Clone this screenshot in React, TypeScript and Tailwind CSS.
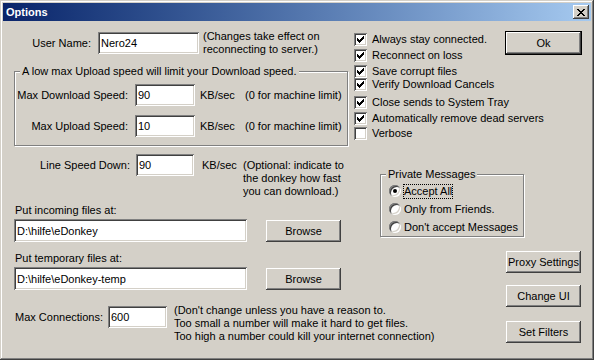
import React from "react";

const raised =
  "bg-[#d4d0c8] shadow-[inset_-1px_-1px_#404040,inset_1px_1px_#ffffff,inset_-2px_-2px_#808080,inset_2px_2px_#d4d0c8]";
const sunken =
  "bg-white shadow-[inset_1px_1px_#808080,inset_-1px_-1px_#ffffff,inset_2px_2px_#404040,inset_-2px_-2px_#d4d0c8]";
const etched = "border border-[#808080] shadow-[inset_1px_1px_#ffffff,1px_1px_#ffffff]";

function TextBox({ value, className }: { value: string; className: string }) {
  return (
    <input
      readOnly
      defaultValue={value}
      className={`${sunken} shrink-0 pl-[3px] pr-[2px] text-black outline-none ${className}`}
    />
  );
}

function Button({ label, className }: { label: string; className: string }) {
  return (
    <button className={`${raised} flex h-[22px] w-[75px] shrink-0 items-center justify-center ${className}`}>
      {label}
    </button>
  );
}

function CheckMark() {
  const cols = [2, 3, 4, 3, 2, 1, 0];
  return (
    <svg width="7" height="7" viewBox="0 0 7 7" shapeRendering="crispEdges">
      {cols.map((y, x) => (
        <rect key={x} x={x} y={y} width="1" height="3" fill="#000" />
      ))}
    </svg>
  );
}

function CloseX() {
  const rows = [
    [0, 2, 6, 2],
    [1, 2, 5, 2],
    [2, 4],
    [3, 2],
    [2, 4],
    [1, 2, 5, 2],
    [0, 2, 6, 2],
  ];
  return (
    <svg width="8" height="7" viewBox="0 0 8 7" shapeRendering="crispEdges">
      {rows.map((r, y) => (
        <g key={y}>
          <rect x={r[0]} y={y} width={r[1]} height="1" fill="#000" />
          {r.length > 2 && <rect x={r[2]} y={y} width={r[3]} height="1" fill="#000" />}
        </g>
      ))}
    </svg>
  );
}

const checks = [
  { label: "Always stay connected.", on: true, mt: "mt-[12px]" },
  { label: "Reconnect on loss", on: true, mt: "mt-[3px]" },
  { label: "Save corrupt files", on: true, mt: "mt-[3px]" },
  { label: "Verify Download Cancels", on: true, mt: "mt-0" },
  { label: "Close sends to System Tray", on: true, mt: "mt-[5px]" },
  { label: "Automatically remove dead servers", on: true, mt: "mt-[3px]" },
  { label: "Verbose", on: false, mt: "mt-[2px]" },
];

const radios = [
  { label: "Accept All", on: true },
  { label: "Only from Friends.", on: false },
  { label: "Don't accept Messages", on: false },
];

function SpeedRow({ label, value, className }: { label: string; value: string; className: string }) {
  return (
    <div className={`flex h-[22px] items-center whitespace-nowrap ${className}`}>
      <span className="w-[113px] shrink-0 text-right">{label}</span>
      <TextBox value={value} className="ml-[7px] h-[22px] w-[60px]" />
      <span className="ml-[5px] w-[45px] shrink-0">KB/sec</span>
      <span className="shrink-0">(0 for machine limit)</span>
    </div>
  );
}

export default function App() {
  return (
    <div className="flex h-[360px] w-[594px] flex-col overflow-hidden bg-[#d4d0c8] p-[3px] font-['Liberation_Sans',Arial,sans-serif] text-[11px] text-black shadow-[inset_-1px_-1px_#404040,inset_1px_1px_#d4d0c8,inset_-2px_-2px_#808080,inset_2px_2px_#ffffff]">
      {/* title bar */}
      <div className="flex h-[18px] items-center bg-linear-to-r from-[#0a246a] to-[#a6caf0] pl-[3px] pr-[2px]">
        <span className="font-bold text-white">Options</span>
        <button className={`${raised} ml-auto flex h-[14px] w-[16px] items-center justify-center`}>
          <CloseX />
        </button>
      </div>

      <div className="flex">
        {/* left side */}
        <div className="flex w-[351px] shrink-0 flex-col whitespace-nowrap">
          <div className="mt-[11px] flex h-[22px] items-center">
            <span className="w-[88px] shrink-0 text-right">User Name:</span>
            <TextBox value="Nero24" className="ml-[7px] h-[22px] w-[101px]" />
            <p className="-mt-[2px] ml-[4px] shrink-0 self-start leading-[13px]">
              (Changes take effect on
              <br />
              reconnecting to server.)
            </p>
          </div>

          <div className={`${etched} ml-[11px] mt-[17px] h-[75px] w-[334px]`}>
            <div className="-mt-[7px] ml-[5px] w-fit bg-[#d4d0c8] px-[2px] leading-[13px]">
              A low max Upload speed will limit your Download speed.
            </div>
            <SpeedRow className="mt-[6px]" label="Max Download Speed:" value="90" />
            <SpeedRow className="mt-[9px]" label="Max Upload Speed:" value="10" />
          </div>

          <div className="mt-[8px] flex items-start">
            <span className="flex h-[22px] w-[127px] shrink-0 items-center justify-end">Line Speed Down:</span>
            <TextBox value="90" className="ml-[6px] h-[22px] w-[58px]" />
            <span className="ml-[8px] flex h-[22px] w-[41px] shrink-0 items-center">KB/sec</span>
            <p className="mt-[5px] shrink-0 leading-[13px]">
              (Optional: indicate to
              <br />
              the donkey how fast
              <br />
              you can download.)
            </p>
          </div>

          <p className="ml-[12px] mt-[6px] leading-[13px]">Put incoming files at:</p>
          <div className="mt-[2px] flex items-start">
            <TextBox value="D:\hilfe\eDonkey" className="ml-[11px] h-[23px] w-[233px]" />
            <Button label="Browse" className="ml-[19px] mt-[1px]" />
          </div>

          <p className="ml-[12px] mt-[10px] leading-[13px]">Put temporary files at:</p>
          <div className="mt-[2px] flex items-start">
            <TextBox value="D:\hilfe\eDonkey-temp" className="ml-[11px] h-[23px] w-[233px]" />
            <Button label="Browse" className="ml-[19px] mt-[1px]" />
          </div>

          <div className="mt-[16px] flex h-[22px] items-center">
            <span className="ml-[12px] w-[93px] shrink-0">Max Connections:</span>
            <TextBox value="600" className="h-[22px] w-[59px]" />
            <p className="-mt-[2px] ml-[7px] shrink-0 self-start leading-[13px]">
              (Don't change unless you have a reason to.
              <br />
              Too small a number will make it hard to get files.
              <br />
              Too high a number could kill your internet connection)
            </p>
          </div>
        </div>

        {/* right side */}
        <div className="flex w-[227px] shrink-0 flex-col whitespace-nowrap">
          <div className="grid">
            <div className="col-start-1 row-start-1 flex flex-col">
              {checks.map((c) => (
                <div key={c.label} className={`flex h-[13px] items-center ${c.mt}`}>
                  <span className={`${sunken} flex h-[13px] w-[13px] shrink-0 items-center justify-center`}>
                    {c.on && <CheckMark />}
                  </span>
                  <span className="ml-[5px] leading-[13px]">{c.label}</span>
                </div>
              ))}
            </div>
            <button
              className={`${raised} col-start-1 row-start-1 mt-[11px] flex h-[22px] w-[75px] items-center justify-center self-start justify-self-end outline outline-1 outline-black`}
            >
              Ok
            </button>
          </div>

          <div className={`${etched} ml-[26px] mt-[34px] h-[63px] w-[144px]`}>
            <div className="-mt-[7px] ml-[5px] w-fit bg-[#d4d0c8] px-[2px] leading-[13px]">Private Messages</div>
            <div className="mt-[1px] flex flex-col">
              {radios.map((r) => (
                <div key={r.label} className="flex h-[18px] items-center">
                  <span
                    className={`${sunken} ml-[8px] flex h-[12px] w-[12px] shrink-0 items-center justify-center rounded-full`}
                  >
                    {r.on && <span className="h-[4px] w-[4px] rounded-full bg-black" />}
                  </span>
                  {r.on ? (
                    <span className="ml-[3px] leading-[13px] outline-1 outline-offset-0 outline-dotted outline-black">
                      {r.label}
                    </span>
                  ) : (
                    <span className="ml-[3px] leading-[13px]">{r.label}</span>
                  )}
                </div>
              ))}
            </div>
          </div>

          <Button label="Proxy Settings" className="mt-[14px] self-end" />
          <Button label="Change UI" className="mt-[12px] self-end" />
          <Button label="Set Filters" className="mt-[14px] self-end" />
        </div>
      </div>
    </div>
  );
}
